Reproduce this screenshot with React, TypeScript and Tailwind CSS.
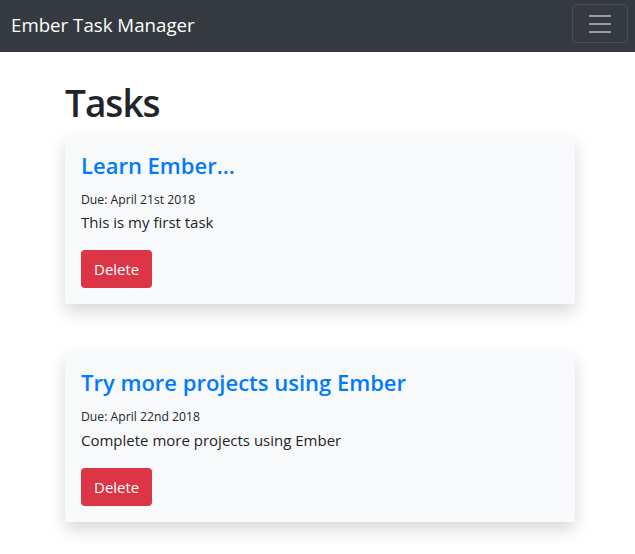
import React from 'react';

const tasks = [
  { id: 1, title: 'Learn Ember...', due: 'April 21st 2018', description: 'This is my first task' },
  { id: 2, title: 'Try more projects using Ember', due: 'April 22nd 2018', description: 'Complete more projects using Ember' },
];

export default function App() {
  return (
    <div className="min-h-screen bg-white text-[#212529] font-['Open_Sans',sans-serif]">
      <nav className="h-[52px] bg-[#343a40] flex items-start justify-between pl-[11px] pr-[7px] pt-[4px]">
        <a href="#" className="mt-[6px] text-[18.7px] leading-[30px] text-white whitespace-nowrap">
          Ember Task Manager
        </a>
        <button className="w-[56px] h-[39px] border border-white/10 rounded-[5px] flex items-center justify-center">
          <svg width="30" height="30" viewBox="0 0 30 30">
            <path d="M4 7h22M4 15h22M4 23h22" stroke="rgba(255,255,255,0.5)" strokeWidth="2" />
          </svg>
        </button>
      </nav>

      <div className="w-[510px] ml-[65px] pt-[27px]">
        <h1 className="text-[37px] leading-[48px] font-semibold mb-2 tracking-[-1px]">Tasks</h1>
        {tasks.map(t => (
          <div key={t.id} className="bg-[#f8f9fa] p-4 mb-12 shadow-[0_8px_16px_rgba(0,0,0,0.15)]">
            <h4 className="text-[22px] leading-[28.8px] text-[#007bff] font-semibold mb-[10px]">{t.title}</h4>
            <small className="block text-[12.2px] leading-[19.5px]">Due: {t.due}</small>
            <p className="mt-px text-[15px] leading-[24px] mb-4">{t.description}</p>
            <button className="bg-[#dc3545] text-white text-[15px] leading-[24px] px-[13px] py-[7px] rounded-[4px]">
              Delete
            </button>
          </div>
        ))}
      </div>
    </div>
  );
}
